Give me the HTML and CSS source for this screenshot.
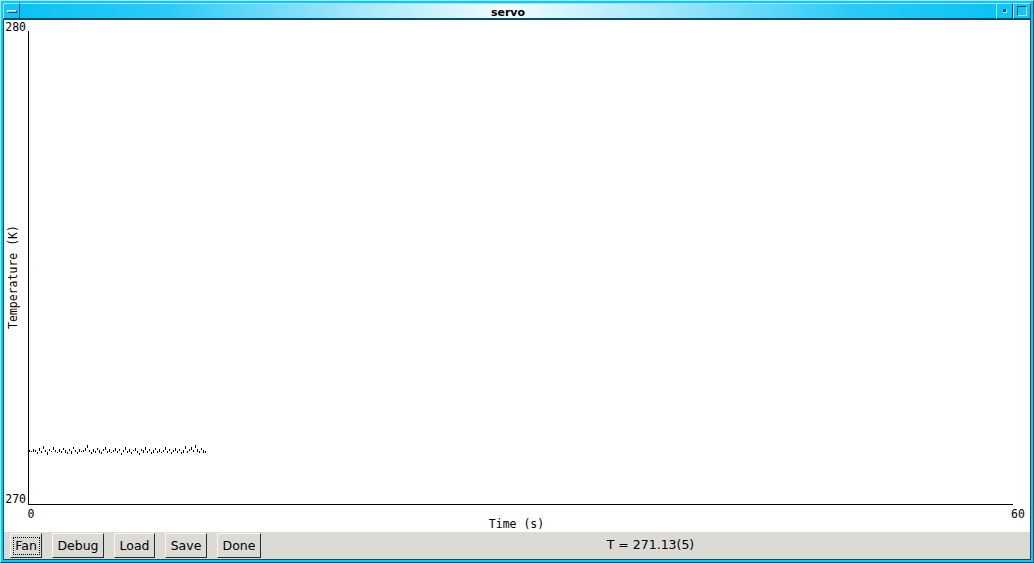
FILE: index.html
```html
<!DOCTYPE html>
<html>
<head>
<meta charset="utf-8">
<title>servo</title>
<link rel="stylesheet" href="styles.css">
</head>
<body>
<div class="window">
  <div class="titlebar">
    <div class="tbtn tbtn-menu"><span class="menu-bar"></span></div>
    <div class="title">servo</div>
    <div class="tbtn tbtn-min"><span class="min-dot"></span></div>
    <div class="tbtn tbtn-max"><span class="max-box"></span></div>
  </div>
  <div class="client">
    <div class="plot">
      <svg class="chart" width="1026" height="512" viewBox="4 20 1026 512" xmlns="http://www.w3.org/2000/svg">
        <g class="axes" shape-rendering="crispEdges">
          <line x1="28.5" y1="31" x2="28.5" y2="505"/>
          <line x1="28" y1="504.5" x2="1013" y2="504.5"/>
        </g>
        <g class="labels">
          <text x="26" y="31" text-anchor="end">280</text>
          <text x="26" y="503" text-anchor="end">270</text>
          <text x="27.5" y="518">0</text>
          <text x="1011" y="518">60</text>
          <text x="516.5" y="528" text-anchor="middle">Time (s)</text>
          <text transform="translate(17,277) rotate(-90)" text-anchor="middle">Temperature (K)</text>
        </g>
        <path class="trace" shape-rendering="crispEdges" d="M29.5 450v2M31.5 451v1M33.5 449v3M35.5 450v2M37.5 452v2M39.5 448v3M41.5 451v2M43.5 446v3M45.5 450v2M47.5 452v3M49.5 449v2M51.5 451v1M53.5 447v3M55.5 450v2M57.5 452v1M59.5 449v3M61.5 451v2M63.5 448v2M65.5 450v3M67.5 452v2M69.5 449v2M71.5 451v3M73.5 447v2M75.5 450v2M77.5 452v2M79.5 449v3M81.5 451v1M83.5 450v2M85.5 448v3M87.5 445v3M89.5 450v2M91.5 452v2M93.5 449v3M95.5 451v2M97.5 448v2M99.5 450v3M101.5 452v2M103.5 449v2M105.5 447v3M107.5 451v2M109.5 449v3M111.5 452v1M113.5 450v2M115.5 448v3M117.5 451v2M119.5 449v2M121.5 453v2M123.5 450v2M125.5 447v3M127.5 451v2M129.5 449v3M131.5 452v2M133.5 450v1M135.5 448v3M137.5 451v2M139.5 453v2M141.5 449v2M143.5 450v3M145.5 447v3M147.5 451v2M149.5 449v2M151.5 452v2M153.5 450v3M155.5 448v2M157.5 451v2M159.5 449v3M161.5 452v1M163.5 450v2M165.5 447v3M167.5 451v2M169.5 449v2M171.5 452v2M173.5 450v2M175.5 448v3M177.5 451v2M179.5 449v2M181.5 452v2M183.5 450v3M185.5 446v3M187.5 451v2M189.5 449v2M191.5 447v3M193.5 450v2M195.5 445v3M197.5 449v3M199.5 451v2M201.5 448v2M203.5 450v3M205.5 451v2"/>
      </svg>
    </div>
    <div class="buttonbar">
      <button class="btn btn-fan focused">Fan</button>
      <button class="btn btn-debug">Debug</button>
      <button class="btn btn-load">Load</button>
      <button class="btn btn-save">Save</button>
      <button class="btn btn-done">Done</button>
      <div class="status">T = 271.13(5)</div>
    </div>
  </div>
</div>
</body>
</html>
```
FILE: styles.css
```css
html, body {
  margin: 0;
  padding: 0;
  width: 1034px;
  height: 563px;
  overflow: hidden;
  background: #14c4f4;
}

.window {
  box-sizing: border-box;
  width: 1034px;
  height: 563px;
  background: #14c4f4;
  border: 1px solid;
  border-color: #9ae8fc #0a4e66 #0a4e66 #9ae8fc;
  padding: 2px;
  display: flex;
  flex-direction: column;
}

.titlebar {
  height: 16px;
  display: flex;
  flex: none;
}

.tbtn {
  box-sizing: border-box;
  width: 17px;
  height: 16px;
  background: #14c4f4;
  border: 1px solid;
  border-color: #9ae8fc #0a4e66 #0a4e66 #9ae8fc;
  display: flex;
  align-items: center;
  justify-content: center;
  flex: none;
}

.tbtn-menu {
  width: 17px;
}

.menu-bar {
  display: block;
  width: 10px;
  height: 3px;
  box-sizing: border-box;
  background: #7adcfa;
  border: 1px solid #0a4e66;
  border-top-color: #c8f2fe;
  border-left-color: #c8f2fe;
}

.tbtn-min {
  width: 17px;
}

.min-dot {
  display: block;
  width: 4px;
  height: 4px;
  box-sizing: border-box;
  background: #0a4e66;
  border-right: 1px solid #9ae8fc;
  border-bottom: 1px solid #9ae8fc;
}

.tbtn-max {
  width: 18px;
}

.max-box {
  display: block;
  width: 10px;
  height: 10px;
  box-sizing: border-box;
  border: 1px solid;
  border-color: #0a4e66 #9ae8fc #9ae8fc #0a4e66;
  background: #14c4f4;
}

.title {
  flex: 1;
  box-sizing: border-box;
  height: 16px;
  border-top: 1px solid #9ae8fc;
  border-bottom: 1px solid #0a4e66;
  background: linear-gradient(90deg, #0cc2f4 0%, #2ccaf6 15%, #a8e8fc 35%, #f2fcff 50%, #a8e8fc 65%, #2ccaf6 85%, #0cc2f4 100%);
  font-family: "DejaVu Sans", sans-serif;
  font-weight: bold;
  font-size: 11px;
  line-height: 14px;
  padding-top: 2px;
  text-align: center;
  color: #000;
}

.client {
  flex: 1;
  border: 1px solid #0a4e66;
  display: flex;
  flex-direction: column;
  min-height: 0;
}

.plot {
  height: 512px;
  flex: none;
  background: #fff;
}

.chart {
  display: block;
}

.axes line {
  stroke: #000;
  stroke-width: 1;
}

.labels text {
  font-family: "DejaVu Sans Mono", monospace;
  font-size: 11.5px;
  fill: #000;
}

.trace {
  fill: none;
  stroke: #000;
  stroke-width: 1;
}

.buttonbar {
  flex: 1;
  background: #dcdad5;
  display: flex;
  align-items: flex-start;
  gap: 10px;
  padding: 1px 0 0 6px;
}

.btn {
  position: relative;
  box-sizing: border-box;
  height: 25px;
  padding: 0 0 1px 0;
  margin: 0;
  background: #dcdad5;
  border: 1px solid;
  border-color: #f6f5f3 #2a2a2a #2a2a2a #f6f5f3;
  border-radius: 0;
  font-family: "DejaVu Sans", sans-serif;
  font-size: 12.5px;
  color: #000;
  text-align: center;
  flex: none;
}

.btn-fan { width: 32px; }
.btn-debug { width: 52px; }
.btn-load { width: 41px; }
.btn-save { width: 42px; }
.btn-done { width: 44px; }

.focused::after {
  content: "";
  position: absolute;
  left: 2px;
  top: 3px;
  right: 1px;
  bottom: 2px;
  border: 1px dotted #000;
}

.status {
  flex: 1;
  height: 25px;
  line-height: 24px;
  font-family: "DejaVu Sans", sans-serif;
  font-size: 12.5px;
  color: #000;
  text-align: center;
}
```
